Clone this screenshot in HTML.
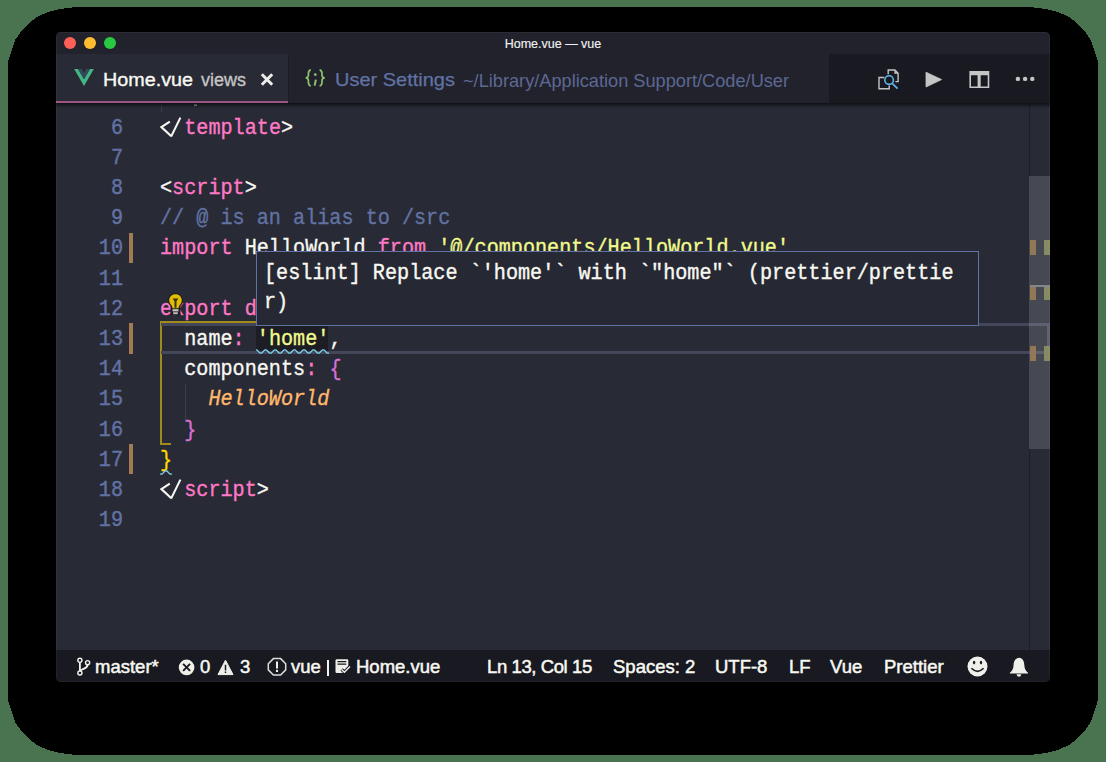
<!DOCTYPE html>
<html><head><meta charset="utf-8">
<style>
html,body{margin:0;padding:0;}
body{width:1106px;height:762px;position:relative;overflow:hidden;background:#4a7350;font-family:"Liberation Sans",sans-serif;}
.abs{position:absolute;}
#win{position:absolute;left:56px;top:32px;width:994px;height:650px;border-radius:5px;overflow:hidden;background:#282a36;}
#title{position:absolute;left:0;top:0;width:994px;height:22px;background:#21222c;}
.tl{position:absolute;top:5px;width:12px;height:12px;border-radius:50%;}
#tabs{position:absolute;left:0;top:22px;width:994px;height:49px;background:#191a21;}
#tab1{position:absolute;left:0;top:0;width:232px;height:47px;background:#282a36;border-bottom:2px solid #9a5584;}
#tab2{position:absolute;left:232px;top:0;width:540px;height:49px;background:#21222c;border-left:1px solid #1c1d24;}
#editor{position:absolute;left:0;top:71px;width:994px;height:547px;background:#282a36;overflow:hidden;}
#status{position:absolute;left:0;top:618px;width:994px;height:32px;background:#191a21;color:#f8f8f2;font-size:18.5px;}
.st{position:absolute;top:6px;white-space:pre;line-height:21px;-webkit-text-stroke:0.5px currentColor;}
.ln{position:absolute;-webkit-text-stroke:0.45px currentColor;width:67px;transform:scaleX(0.9085);transform-origin:67px 0;text-align:right;font-family:"Liberation Mono",monospace;font-size:22.2px;line-height:30px;color:#6272a4;}
.code{position:absolute;-webkit-text-stroke:0.35px currentColor;left:104px;transform:scaleX(0.9085);transform-origin:0 0;font-family:"Liberation Mono",monospace;font-size:22.2px;line-height:30px;color:#f8f8f2;white-space:pre;}
.p{color:#ff79c6}.y{color:#f1fa8c}.c{color:#6272a4}.o{color:#ffb86c;font-style:italic}.pu{color:#da70d6}.g{color:#ffd700}
</style></head><body>
<svg id="shadow" style="position:absolute;left:0;top:0" width="1106" height="762" viewBox="0 0 1106 762"><path shape-rendering="crispEdges" d="M8.0 64.0 L8.6 59.7 L10.9 52.3 L12.8 46.8 L15.5 39.5 L19.2 34.0 L24.7 27.5 L30.2 22.0 L36.6 17.4 L43.9 13.8 L51.3 11.0 L59.6 9.2 L66.0 8.2 L76.0 7.0 L1030.0 7.0 L1040.0 8.2 L1046.4 9.2 L1054.7 11.0 L1062.1 13.8 L1069.4 17.4 L1075.8 22.0 L1081.3 27.5 L1086.8 34.0 L1090.5 39.5 L1093.2 46.8 L1095.1 52.3 L1097.4 59.7 L1098.0 64.0 L1098.0 698.0 L1097.4 702.3 L1095.1 709.7 L1093.2 715.2 L1090.5 722.5 L1086.8 728.0 L1081.3 734.5 L1075.8 740.0 L1069.4 744.6 L1062.1 748.2 L1054.7 751.0 L1046.4 752.8 L1040.0 753.8 L1030.0 755.0 L76.0 755.0 L66.0 753.8 L59.6 752.8 L51.3 751.0 L43.9 748.2 L36.6 744.6 L30.2 740.0 L24.7 734.5 L19.2 728.0 L15.5 722.5 L12.8 715.2 L10.9 709.7 L8.6 702.3 L8.0 698.0 Z" fill="#000"/></svg>
<div id="win">
  <div id="title">
    <div class="tl" style="left:8px;background:#fe5f57"></div>
    <div class="tl" style="left:28px;background:#febc2e"></div>
    <div class="tl" style="left:48px;background:#28c840"></div>
    <div class="abs" style="left:0;width:994px;top:4px;text-align:center;font-size:12.5px;line-height:16px;color:#f0f0f0;-webkit-text-stroke:0.15px currentColor">Home.vue — vue</div>
  </div>
  <div id="tabs">
    <div id="tab1">
      <svg class="abs" style="left:18px;top:14.8px" width="20" height="17" viewBox="0 0 256 221">
        <path d="M0 0 H50.56 L128 132.48 L204.8 0 H256 L128 220.8 Z" fill="#41b883"/>
        <path d="M50.56 0 H97.92 L128 51.2 L158.08 0 H204.8 L128 132.48 Z" fill="#35495e"/>
      </svg>
      <div class="abs" style="left:47px;top:15px;font-size:18.3px;line-height:22px;color:#f8f8f2;-webkit-text-stroke:0.35px currentColor;transform:scaleX(1.08);transform-origin:0 0">Home.vue</div>
      <div class="abs" style="left:145px;top:15px;font-size:18px;line-height:22px;color:#c4c4c4;-webkit-text-stroke:0.35px currentColor">views</div>
      <svg class="abs" style="left:204px;top:19px" width="14" height="13" viewBox="0 0 14 13">
        <path d="M1.8 1.3 L12.2 11.7 M12.2 1.3 L1.8 11.7" stroke="#ececea" stroke-width="3" stroke-linecap="butt"/>
      </svg>
    </div>
    <div id="tab2">
      <svg class="abs" style="left:16px;top:14.5px" width="21" height="18" viewBox="0 0 21 18"><g fill="none" stroke="#8cc46e" stroke-width="1.7"><path d="M5.8 0.9 C3.8 1.3 3.4 2.6 3.4 4.6 V6.6 C3.4 7.9 2.7 8.5 0.8 8.9 C2.7 9.3 3.4 9.9 3.4 11.2 V13.3 C3.4 15.3 3.8 16.6 5.8 17"/><path d="M14.6 0.9 C16.6 1.3 17 2.6 17 4.6 V6.6 C17 7.9 17.7 8.5 19.6 8.9 C17.7 9.3 17 9.9 17 11.2 V13.3 C17 15.3 16.6 16.6 14.6 17"/><path d="M10.9 10.6 L9.6 16.6" stroke-width="2"/></g><circle cx="10.3" cy="5.6" r="1.4" fill="#8cc46e"/></svg>
      <div class="abs" style="left:46px;top:15px;font-size:18.5px;line-height:22px;color:#6272a4;-webkit-text-stroke:0.25px currentColor;transform:scaleX(1.08);transform-origin:0 0">User Settings</div>
      <div class="abs" style="left:174px;top:15.5px;font-size:18.2px;line-height:22px;color:#5d6893">~/Library/Application Support/Code/User</div>
    </div>
    <svg class="abs" style="left:821px;top:14px" width="24" height="24" viewBox="0 0 24 24">
      <g fill="none" stroke="#c5c5c5" stroke-width="1.4">
        <path d="M11.2 6.3 V2 H17.9 L21.1 5.2 V13.6 H18.4"/>
        <path d="M7.3 9.5 H2 V20.8 H12.2 V17.6"/>
      </g>
      <path d="M17.4 2 V5.7 H21.1 Z" fill="#c5c5c5"/>
      <circle cx="12.1" cy="12.1" r="4.3" fill="none" stroke="#5db3ea" stroke-width="1.6"/>
      <path d="M15.2 15.3 L20.6 20.7" stroke="#5db3ea" stroke-width="1.8"/>
    </svg>
    <svg class="abs" style="left:869px;top:17px" width="18" height="18" viewBox="0 0 18 18">
      <path d="M1 1.2 L16.6 8.6 L1 16 Z" fill="#c5c5c5" stroke="#c5c5c5" stroke-width="0.8" stroke-linejoin="round"/>
    </svg>
    <svg class="abs" style="left:913px;top:17px" width="21" height="18" viewBox="0 0 21 18">
      <path d="M0.4 0 H20.3 V17 H0.4 Z M2 4.2 V15.5 H8.6 V4.2 Z M11.7 4.2 V15.5 H18.7 V4.2 Z" fill="#c5c5c5" fill-rule="evenodd"/>
    </svg>
    <svg class="abs" style="left:955px;top:19px" width="26" height="12" viewBox="0 0 26 12">
      <circle cx="6.9" cy="5.9" r="2.2" fill="#c5c5c5"/><circle cx="14.1" cy="5.9" r="2.2" fill="#c5c5c5"/><circle cx="21.3" cy="5.9" r="2.2" fill="#c5c5c5"/>
    </svg>
  </div>
  <div id="editor">

<div class="abs" style="left:105px;top:0;width:1px;height:9px;background:#3c3e4c"></div>
<div class="abs" style="left:129px;top:281px;width:1px;height:38px;background:#3c3e4c"></div>
<div class="abs" style="left:73px;top:129.5px;width:4px;height:30px;background:#a07c50"></div>
<div class="abs" style="left:73px;top:220px;width:4px;height:30.5px;background:#a07c50"></div>
<div class="abs" style="left:73px;top:340.7px;width:4px;height:30px;background:#a07c50"></div>
<div class="abs" style="left:200px;top:223px;width:72px;height:26px;background:#1c1d25"></div>
<div class="abs" style="left:104px;top:218px;width:2px;height:124px;background:#a08c1c"></div>
<div class="abs" style="left:104px;top:218px;width:180px;height:2px;background:#a08c1c"></div>
<div class="abs" style="left:104px;top:340px;width:11px;height:2px;background:#a08c1c"></div>
<div class="abs" style="left:105px;top:220px;width:886px;height:25px;border-top:3px solid #44475a;border-bottom:3px solid #44475a;border-right:3px solid #44475a"></div>
<div class="ln" style="top:10.80px">6</div>
<div class="ln" style="top:40.97px">7</div>
<div class="ln" style="top:71.14px">8</div>
<div class="ln" style="top:101.31px">9</div>
<div class="ln" style="top:131.48px">10</div>
<div class="ln" style="top:161.65px">11</div>
<div class="ln" style="top:191.82px">12</div>
<div class="ln" style="top:221.99px">13</div>
<div class="ln" style="top:252.16px">14</div>
<div class="ln" style="top:282.33px">15</div>
<div class="ln" style="top:312.50px">16</div>
<div class="ln" style="top:342.67px">17</div>
<div class="ln" style="top:372.84px">18</div>
<div class="ln" style="top:403.01px">19</div>
<div class="abs" style="left:138px;top:1px;width:3px;height:2px;background:#b8b49a"></div>
<div class="code" style="top:10.80px">  <span class="p">template</span>&gt;</div>
<svg class="abs" style="left:104px;top:10.8px" width="24" height="26" viewBox="0 0 24 26"><path d="M9.8 7.6 L1.4 13 L11.3 22.3 M20.4 3.6 L11.1 22.6" fill="none" stroke="#f8f8f2" stroke-width="2.1" stroke-linejoin="miter"/></svg>
<div class="code" style="top:71.14px">&lt;<span class="p">script</span>&gt;</div>
<div class="code" style="top:101.31px"><span class="c">// @ is an alias to /src</span></div>
<div class="code" style="top:131.48px"><span class="p">import</span> HelloWorld <span class="p">from</span> <span class="y">'@/components/HelloWorld.vue'</span></div>
<div class="code" style="top:191.82px"><span class="p">export</span> <span class="p">default</span> {</div>
<div class="code" style="top:221.99px">  name<span class="p">:</span> <span class="y">'home'</span>,</div>
<div class="code" style="top:252.16px">  components<span class="p">:</span> <span class="pu">{</span></div>
<div class="code" style="top:282.33px">    <span class="o">HelloWorld</span></div>
<div class="code" style="top:312.50px">  <span class="pu">}</span></div>
<div class="code" style="top:342.67px"><span class="g">}</span></div>
<div class="code" style="top:372.84px">  <span class="p">script</span>&gt;</div>
<svg class="abs" style="left:104px;top:372.84px" width="24" height="26" viewBox="0 0 24 26"><path d="M9.8 7.6 L1.4 13 L11.3 22.3 M20.4 3.6 L11.1 22.6" fill="none" stroke="#f8f8f2" stroke-width="2.1" stroke-linejoin="miter"/></svg>

<svg class="abs" style="left:200px;top:246px" width="73" height="5" viewBox="0 0 73 5"><path d="M0.0 0.80 L0.5 0.89 L1.0 1.15 L1.5 1.56 L2.0 2.06 L2.5 2.61 L3.0 3.15 L3.5 3.62 L4.0 3.97 L4.5 4.17 L5.0 4.19 L5.5 4.02 L6.0 3.70 L6.5 3.25 L7.0 2.72 L7.5 2.17 L8.0 1.65 L8.5 1.22 L9.0 0.93 L9.5 0.80 L10.0 0.86 L10.5 1.09 L11.0 1.47 L11.5 1.95 L12.0 2.50 L12.5 3.05 L13.0 3.53 L13.5 3.91 L14.0 4.14 L14.5 4.20 L15.0 4.07 L15.5 3.78 L16.0 3.35 L16.5 2.83 L17.0 2.28 L17.5 1.75 L18.0 1.30 L18.5 0.98 L19.0 0.81 L19.5 0.83 L20.0 1.03 L20.5 1.38 L21.0 1.85 L21.5 2.39 L22.0 2.94 L22.5 3.44 L23.0 3.85 L23.5 4.11 L24.0 4.20 L24.5 4.11 L25.0 3.85 L25.5 3.44 L26.0 2.94 L26.5 2.39 L27.0 1.85 L27.5 1.38 L28.0 1.03 L28.5 0.83 L29.0 0.81 L29.5 0.98 L30.0 1.30 L30.5 1.75 L31.0 2.28 L31.5 2.83 L32.0 3.35 L32.5 3.78 L33.0 4.07 L33.5 4.20 L34.0 4.14 L34.5 3.91 L35.0 3.53 L35.5 3.05 L36.0 2.50 L36.5 1.95 L37.0 1.47 L37.5 1.09 L38.0 0.86 L38.5 0.80 L39.0 0.93 L39.5 1.22 L40.0 1.65 L40.5 2.17 L41.0 2.72 L41.5 3.25 L42.0 3.70 L42.5 4.02 L43.0 4.19 L43.5 4.17 L44.0 3.97 L44.5 3.62 L45.0 3.15 L45.5 2.61 L46.0 2.06 L46.5 1.56 L47.0 1.15 L47.5 0.89 L48.0 0.80 L48.5 0.89 L49.0 1.15 L49.5 1.56 L50.0 2.06 L50.5 2.61 L51.0 3.15 L51.5 3.62 L52.0 3.97 L52.5 4.17 L53.0 4.19 L53.5 4.02 L54.0 3.70 L54.5 3.25 L55.0 2.72 L55.5 2.17 L56.0 1.65 L56.5 1.22 L57.0 0.93 L57.5 0.80 L58.0 0.86 L58.5 1.09 L59.0 1.47 L59.5 1.95 L60.0 2.50 L60.5 3.05 L61.0 3.53 L61.5 3.91 L62.0 4.14 L62.5 4.20 L63.0 4.07 L63.5 3.78 L64.0 3.35 L64.5 2.83 L65.0 2.28 L65.5 1.75 L66.0 1.30 L66.5 0.98 L67.0 0.81 L67.5 0.83 L68.0 1.03 L68.5 1.38 L69.0 1.85 L69.5 2.39 L70.0 2.94 L70.5 3.44 L71.0 3.85 L71.5 4.11 L72.0 4.20 L72.5 4.11 L73.0 3.85" fill="none" stroke="#7fd6ee" stroke-width="1.3"/></svg>
<svg class="abs" style="left:104px;top:367px" width="13" height="5" viewBox="0 0 13 5"><path d="M0.0 3.70 L0.5 4.02 L1.0 4.19 L1.5 4.17 L2.0 3.97 L2.5 3.62 L3.0 3.15 L3.5 2.61 L4.0 2.06 L4.5 1.56 L5.0 1.15 L5.5 0.89 L6.0 0.80 L6.5 0.89 L7.0 1.15 L7.5 1.56 L8.0 2.06 L8.5 2.61 L9.0 3.15 L9.5 3.62 L10.0 3.97 L10.5 4.17 L11.0 4.19 L11.5 4.02 L12.0 3.70" fill="none" stroke="#7fd6ee" stroke-width="1.3"/></svg>
<svg class="abs" style="left:111px;top:190px" width="18" height="24" viewBox="0 0 18 24">
  <path d="M8.5 0 C3.8 0 1 3.3 1 7.2 C1 10 2.4 11.6 3.6 13.3 V22.5 H13.4 V13.3 C14.6 11.6 16 10 16 7.2 C16 3.3 13.2 0 8.5 0 Z" fill="#1e1f26"/>
  <path d="M8.5 1.2 C4.7 1.2 2.2 3.9 2.2 7.2 C2.2 9.8 3.8 11.3 4.9 13 L5.6 15.3 H11.4 L12.1 13 C13.2 11.3 14.8 9.8 14.8 7.2 C14.8 3.9 12.3 1.2 8.5 1.2 Z" fill="#e2bd00"/>
  <path d="M5.6 5.6 H11.4 L9.5 8.2 V14.8 H7.5 V8.2 Z" fill="#3b3418"/>
  <rect x="5.5" y="16.2" width="6" height="2.2" fill="#c4c4c4"/>
  <rect x="6.2" y="19.2" width="4.6" height="2" fill="#b8b8b8"/>
</svg>
<div class="abs" style="left:973px;top:0;width:1px;height:73px;background:#1d1e26"></div><div class="abs" style="left:973px;top:346px;width:1px;height:201px;background:#1d1e26"></div>
<div class="abs" style="left:973px;top:73px;width:21px;height:273px;background:rgba(255,255,255,0.14)"></div>
<div class="abs" style="left:974px;top:137px;width:6px;height:15px;background:#937858"></div>
<div class="abs" style="left:988px;top:137px;width:6px;height:15px;background:#878b63"></div>
<div class="abs" style="left:974px;top:182.5px;width:6px;height:14.5px;background:#937858"></div>
<div class="abs" style="left:988px;top:182.5px;width:6px;height:14.5px;background:#878b63"></div>
<div class="abs" style="left:974px;top:182px;width:20px;height:1.5px;background:#85858d"></div>
<div class="abs" style="left:974px;top:243px;width:6px;height:14.5px;background:#937858"></div>
<div class="abs" style="left:988px;top:243px;width:6px;height:14.5px;background:#878b63"></div>
<div class="abs" style="left:200px;top:148px;width:721px;height:73px;background:#262833;border:1px solid #6272a4;">
  <div class="abs" style="left:7px;top:8px;transform:scaleX(0.9085);transform-origin:0 0;font-family:'Liberation Mono',monospace;font-size:22.2px;line-height:28.6px;color:#f8f8f2;white-space:pre;-webkit-text-stroke:0.4px currentColor">[eslint] Replace `'home'` with `"home"` (prettier/prettie
r)</div>
</div>
<div class="abs" style="left:0;top:0;width:994px;height:5px;background:linear-gradient(rgba(14,15,19,0.95),rgba(14,15,19,0))"></div>
</div>
  <div id="status">

    <svg class="abs" style="left:18px;top:6px" width="18" height="22" viewBox="0 0 18 22">
      <g fill="none" stroke="#f4f4ee" stroke-width="1.4">
        <circle cx="5.9" cy="4.3" r="2.05"/><circle cx="5.9" cy="17" r="2.05"/><circle cx="13.6" cy="6.7" r="2.05"/>
        <path d="M5.9 6.4 V14.9" stroke-width="1.8"/>
        <path d="M13.6 8.8 C13.6 12.6 9.5 12.3 6.2 14.6" stroke-width="1.8"/>
      </g>
    </svg>
    <svg class="abs" style="left:122px;top:9px" width="17" height="17" viewBox="0 0 17 17">
      <circle cx="8.6" cy="8.4" r="7.8" fill="#f0f0ea"/>
      <path d="M5.1 4.9 L12.1 11.9 M12.1 4.9 L5.1 11.9" stroke="#191a21" stroke-width="1.9"/>
    </svg>
    <svg class="abs" style="left:161px;top:9px" width="17" height="17" viewBox="0 0 17 17">
      <path d="M8.5 1.2 L16 15.6 H1 Z" fill="#f0f0ea" stroke="#f0f0ea" stroke-width="1" stroke-linejoin="round"/>
      <path d="M8.5 5.8 V11.4" stroke="#191a21" stroke-width="1.5"/>
      <rect x="7.75" y="12.5" width="1.5" height="1.5" fill="#191a21"/>
    </svg>
    <svg class="abs" style="left:211px;top:7px" width="20" height="20" viewBox="0 0 20 20">
      <path d="M6.4 1.6 H13.6 L18.7 6.7 V12.9 L13.6 18 H6.4 L1.3 12.9 V6.7 Z" fill="none" stroke="#dcdcd6" stroke-width="1.5"/>
      <path d="M10 4.6 V11.5" stroke="#f0f0ea" stroke-width="2"/>
      <rect x="9" y="12.8" width="2" height="2.2" fill="#f0f0ea"/>
    </svg>
    <div class="abs" style="left:271px;top:10px;width:2px;height:16px;background:#f4f4ee"></div>
    <svg class="abs" style="left:279px;top:9px" width="16" height="16" viewBox="0 0 16 16">
      <path d="M0.5 1.5 Q0.5 0.2 1.8 0.2 H12 Q13.3 0.2 13.3 1.5 V7.5 L8.5 13.3 L8 14 H1.8 Q0.5 14 0.5 12.7 Z" fill="#f0f0ea"/>
      <path d="M2.5 2.7 H11.3 M2.5 5.2 H11.3" stroke="#191a21" stroke-width="1.3"/>
      <path d="M6.6 10.4 L9.4 13.2 L15 7.4" fill="none" stroke="#191a21" stroke-width="3.2"/>
      <path d="M6.6 10.4 L9.4 13.2 L15 7.4" fill="none" stroke="#f0f0ea" stroke-width="1.4"/>
    </svg>
    <svg class="abs" style="left:911px;top:6px" width="21" height="21" viewBox="0 0 21 21">
      <circle cx="10.5" cy="10.5" r="10" fill="#f0f0ea"/>
      <ellipse cx="7.1" cy="6.6" rx="1.2" ry="1.8" fill="#191a21"/><ellipse cx="14" cy="6.6" rx="1.2" ry="1.8" fill="#191a21"/>
      <path d="M4.4 12.3 Q10.5 18.3 16.6 12.3" fill="none" stroke="#191a21" stroke-width="1.6"/>
    </svg>
    <svg class="abs" style="left:953px;top:7px" width="20" height="21" viewBox="0 0 20 21">
      <path d="M9.95 0.8 C6 1.2 4.7 4.6 4.6 8 C4.4 11.5 3.3 13.6 0.9 15.8 V16.4 H19 V15.8 C16.6 13.6 15.5 11.5 15.3 8 C15.2 4.6 13.9 1.2 9.95 0.8 Z" fill="#f0f0ea"/>
      <path d="M7.5 17.2 H12.4 Q11.8 19.7 9.95 19.8 Q8.1 19.7 7.5 17.2 Z" fill="#f0f0ea"/>
    </svg>
    <div class="st" style="left:39px">master*</div>
    <div class="st" style="left:144px">0</div>
    <div class="st" style="left:184px">3</div>
    <div class="st" style="left:235px">vue</div>
    <div class="st" style="left:300px">Home.vue</div>
    <div class="st" style="left:431px;letter-spacing:-0.4px">Ln 13, Col 15</div>
    <div class="st" style="left:557px">Spaces: 2</div>
    <div class="st" style="left:659px">UTF-8</div>
    <div class="st" style="left:733px">LF</div>
    <div class="st" style="left:774px">Vue</div>
    <div class="st" style="left:828px">Prettier</div>
  </div>
  <div class="abs" style="left:0;top:0;width:994px;height:650px;border-radius:5px;box-shadow:inset 0 0 0 1px rgba(255,255,255,0.045)"></div>
</div>
</body></html>
